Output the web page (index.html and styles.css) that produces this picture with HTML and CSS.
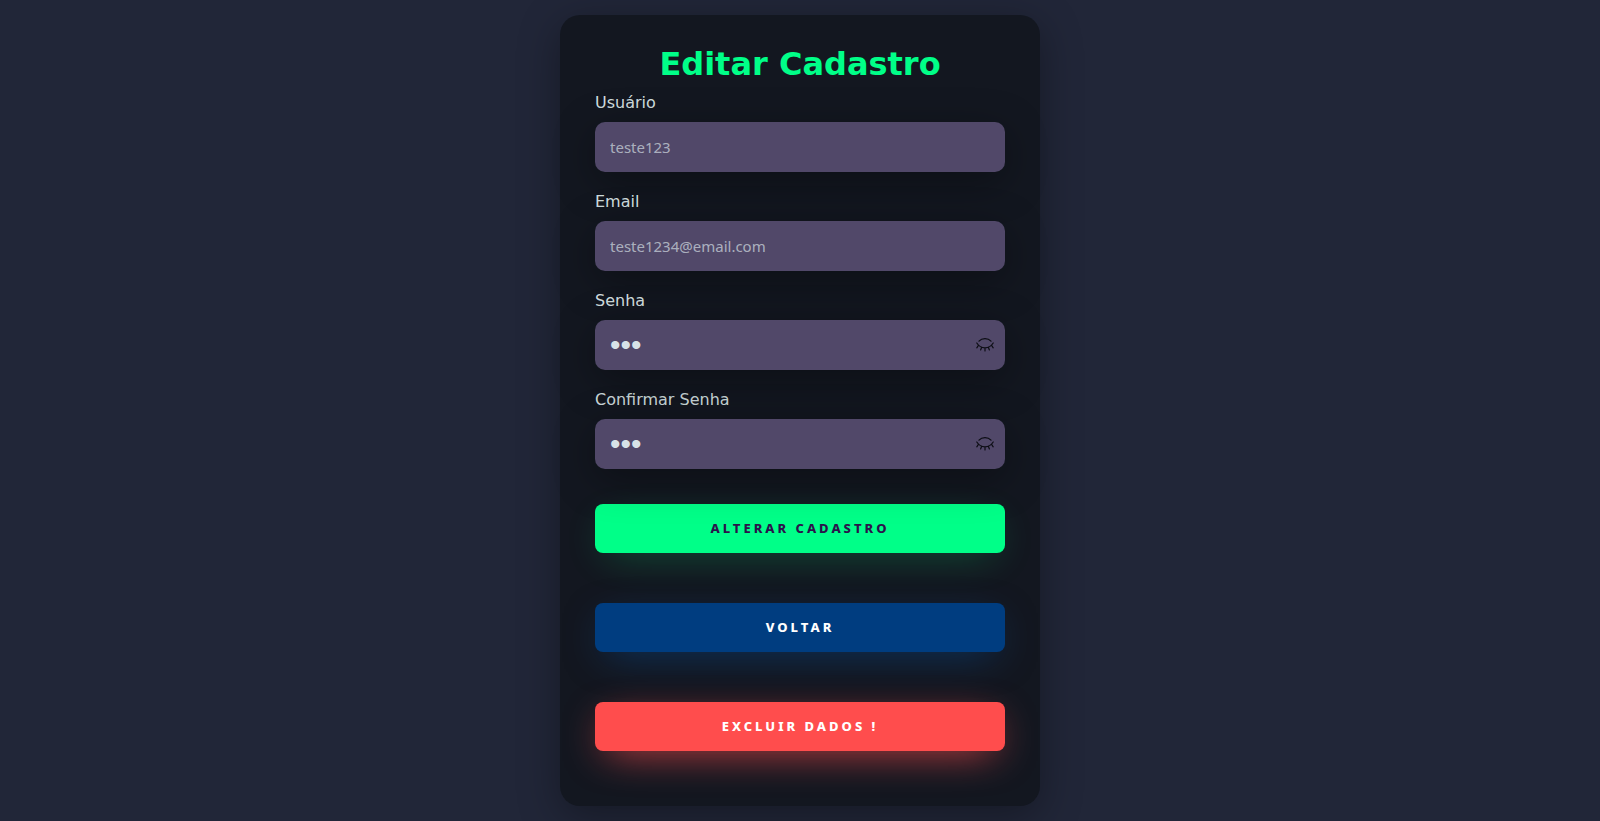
FILE: index.html
```html
<!DOCTYPE html>
<html lang="pt-BR">
<head>
<meta charset="utf-8">
<title>Editar Cadastro</title>
<link rel="stylesheet" href="styles.css">
</head>
<body>
<svg class="sprite" aria-hidden="true">
  <symbol id="eye-closed" viewBox="0 0 18 18">
    <path d="M3 5.2C6 1.7 12 1.7 15 5.2M.8 7C4.8 13.4 13.2 13.4 17.2 7M2.6 9.2L.8 11.8M5.7 11.2L4.6 14M9 11.8V15M12.3 11.2L13.4 14M15.4 9.2L17.2 11.8"/>
  </symbol>
</svg>
<main class="page">
  <form class="card">
    <h1 class="title">Editar Cadastro</h1>
    <div class="field">
      <label class="label" for="usuario">Usuário</label>
      <input class="input" id="usuario" type="text" placeholder="teste123">
    </div>
    <div class="field">
      <label class="label" for="email">Email</label>
      <input class="input" id="email" type="email" placeholder="teste1234@email.com">
    </div>
    <div class="field">
      <label class="label" for="senha">Senha</label>
      <div class="control">
        <input class="input" id="senha" type="password" value="123">
        <button class="toggle" type="button" aria-label="Mostrar senha"><svg class="eye"><use href="#eye-closed"/></svg></button>
      </div>
    </div>
    <div class="field">
      <label class="label" for="confirmar">Confirmar Senha</label>
      <div class="control">
        <input class="input" id="confirmar" type="password" value="123">
        <button class="toggle" type="button" aria-label="Mostrar senha"><svg class="eye"><use href="#eye-closed"/></svg></button>
      </div>
    </div>
    <button class="button save" type="submit">ALTERAR CADASTRO</button>
    <button class="button back" type="button">VOLTAR</button>
    <button class="button delete" type="button">EXCLUIR DADOS !</button>
  </form>
</main>
</body>
</html>
```
FILE: styles.css
```css
* { box-sizing: border-box; }
body {
  margin: 0;
  background: #212638;
  font-family: "DejaVu Sans", sans-serif;
  font-size: 16px;
}
.sprite { display: none; }
.page {
  min-height: 100vh;
  display: flex;
  justify-content: center;
  align-items: center;
}
.card {
  width: 30%;
  min-width: 320px;
  display: flex;
  flex-direction: column;
  padding: 30px 35px;
  border-radius: 20px;
  background: #131720;
  box-shadow: 0 10px 40px #00000056;
}
.title {
  margin: 0;
  color: #00ff88;
  font-size: 32px;
  line-height: 38px;
  text-align: center;
}
.field {
  display: flex;
  flex-direction: column;
  gap: 10px;
  margin: 10px 0;
}
.label {
  color: #f0ffffde;
  line-height: 19px;
}
.control { position: relative; display: flex; }
.input {
  width: 100%;
  border: none;
  border-radius: 10px;
  padding: 15px;
  background: #514869;
  color: #f0ffffde;
  font-family: "Noto Sans", sans-serif;
  font-size: 15px;
  line-height: 20px;
  height: 50px;
  box-shadow: 0 10px 40px #00000056;
  outline: none;
}
.input[type="password"] { font-family: "Liberation Sans", sans-serif; font-size: 30px; }
.input::placeholder { color: #f0ffff94; }
.toggle {
  position: absolute;
  top: 16px;
  right: 11px;
  display: flex;
  padding: 0;
  border: none;
  background: none;
  color: #0c0d14;
  cursor: pointer;
}
.eye {
  width: 18px;
  height: 18px;
  fill: none;
  stroke: currentColor;
  stroke-width: 1.2;
  stroke-linecap: round;
}
.button {
  margin: 25px 0;
  padding: 16px 0;
  border: none;
  border-radius: 8px;
  color: #ffffff;
  font-family: "Noto Sans", sans-serif;
  font-size: 13px;
  font-weight: 800;
  line-height: 17px;
  letter-spacing: 3px;
  cursor: pointer;
}
.save { background: #00ff88; color: #2b134b; box-shadow: 0 10px 40px -12px #00ff8052; }
.back { background: #003d80; box-shadow: 0 10px 40px -12px #0066cc80; }
.delete { background: #ff4d4d; box-shadow: 0 10px 40px -12px #ff4d4d; }
```
